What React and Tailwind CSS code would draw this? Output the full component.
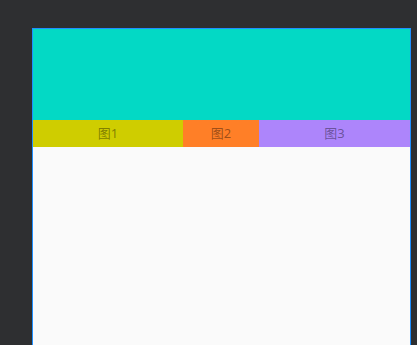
import React from "react";

const tabs = [
  { label: "图1", className: "w-[150px] bg-[#cfcd00]" },
  { label: "图2", className: "w-[76px] bg-[#ff7f27]" },
  { label: "图3", className: "flex-1 bg-[#ad85fb]" },
];

const App = () => {
  return (
    <div className="h-[345px] w-[417px] overflow-hidden bg-[#2e2f31] pl-[32px] pt-[28px]">
      <div
        className="flex h-[340px] w-[379px] flex-col border border-[#1f8fff] bg-[#fafafa]"
        style={{ fontFamily: '"Noto Sans", "Noto Sans CJK SC", sans-serif' }}
      >
        {/* banner */}
        <div className="h-[91px] bg-[#03d9c5]" />
        {/* tab row */}
        <div className="flex h-[27px]">
          {tabs.map((tab) => (
            <div
              key={tab.label}
              className={`flex items-center justify-center text-[13px] text-black/40 ${tab.className}`}
            >
              {tab.label}
            </div>
          ))}
        </div>
        <div className="flex-1" />
      </div>
    </div>
  );
};

export default App;
